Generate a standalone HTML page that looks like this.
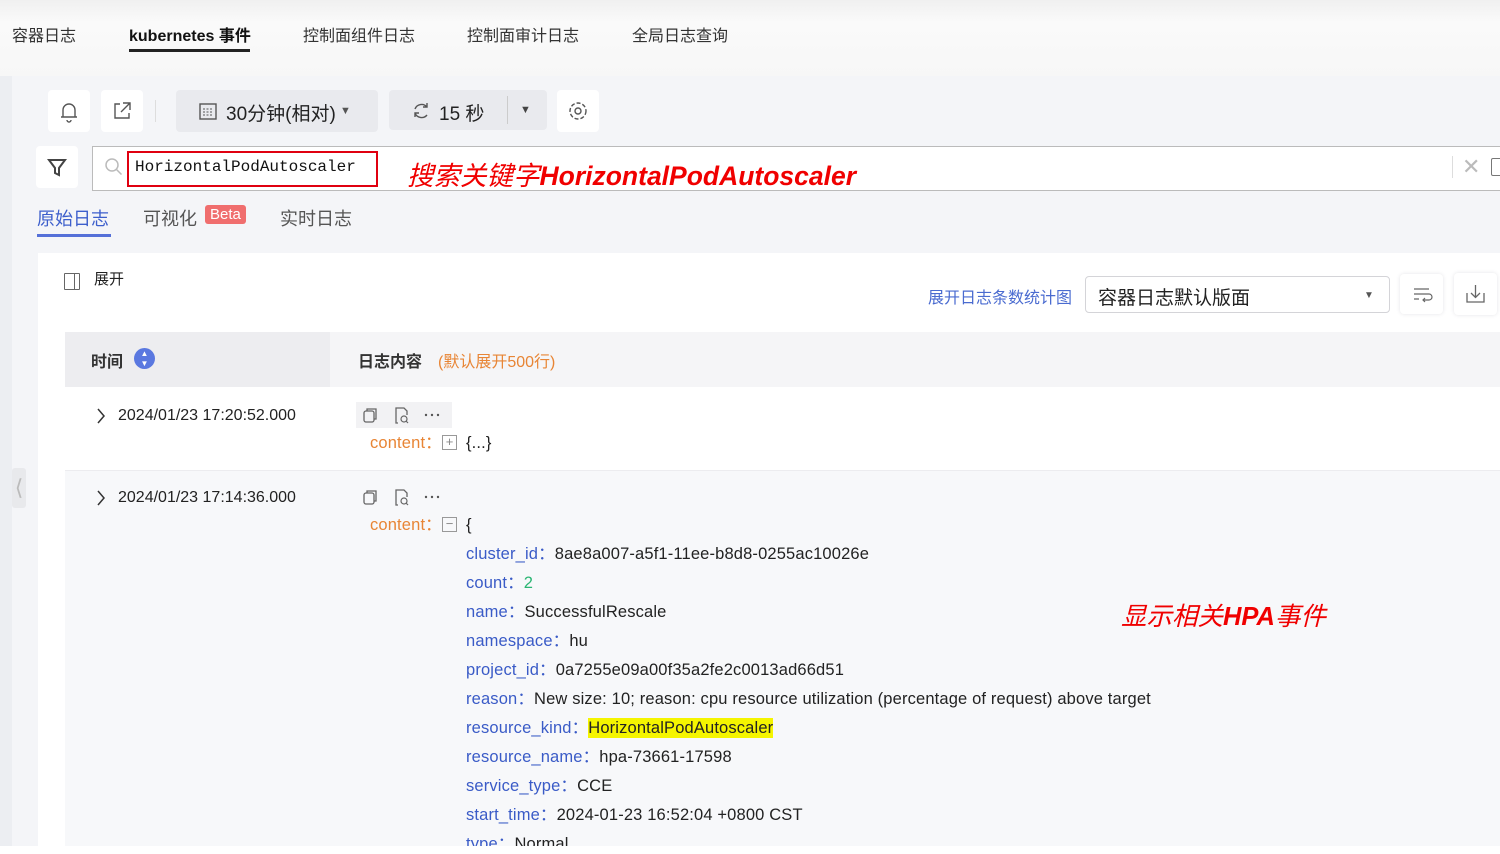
<!DOCTYPE html>
<html><head><meta charset="utf-8"><style>
*{margin:0;padding:0;box-sizing:border-box}
body{width:1500px;height:854px;overflow:hidden;background:#f4f5f8;font-family:"Liberation Sans","Noto Sans CJK SC",sans-serif;color:#222;position:relative}
.a{position:absolute;white-space:nowrap}
.top{position:absolute;left:0;top:0;width:1500px;height:76px;background:linear-gradient(#f0f0f0,#fafafa 30%,#f7f7f7)}
.tab{font-size:16px;color:#333;top:22px}
.btn{position:absolute;background:#fff;border-radius:4px}
.gbtn{position:absolute;background:#e9eaee;border-radius:4px}
.k{color:#3a5bc7}
.ln{position:absolute;left:466px;font-size:16.5px;white-space:nowrap;letter-spacing:0.15px;line-height:20px}
</style></head><body>
<div class="top"></div>
<div class="a tab" style="left:12px">容器日志</div>
<div class="a tab" style="left:129px;font-weight:bold;color:#111">kubernetes 事件</div>
<div class="a" style="left:129px;top:49px;width:121px;height:3px;background:#222"></div>
<div class="a tab" style="left:303px">控制面组件日志</div>
<div class="a tab" style="left:467px">控制面审计日志</div>
<div class="a tab" style="left:632px">全局日志查询</div>
<div class="a" style="left:0;top:76px;width:12px;height:778px;background:#eceef2"></div>

<div class="btn" style="left:48px;top:90px;width:42px;height:42px"><svg width="42" height="42"><path d="M13 27h16M15 27v-7a6 6 0 0 1 12 0v7M19 30a2 2 0 0 0 4 0" fill="none" stroke="#555" stroke-width="1.4"/></svg></div>
<div class="btn" style="left:101px;top:90px;width:42px;height:42px"><svg width="42" height="42"><path d="M19 14h-5v14h14v-5M22 13h7v7M29 13l-9 9" fill="none" stroke="#555" stroke-width="1.4"/></svg></div>
<div class="a" style="left:155px;top:100px;width:1px;height:22px;background:#ddd"></div>
<div class="gbtn" style="left:176px;top:90px;width:202px;height:42px"><svg class="a" style="left:22px;top:11px" width="20" height="20"><rect x="2" y="3" width="16" height="15" fill="none" stroke="#555" stroke-width="1.4"/><path d="M5 8h10M5 11h10M5 14h10" stroke="#555" stroke-dasharray="2 1.5"/></svg><span class="a" style="left:50px;top:9px;font-size:19px">30分钟(相对)</span><span class="a" style="left:164px;top:15px;font-size:11px;color:#555">▼</span></div>
<div class="gbtn" style="left:389px;top:90px;width:158px;height:40px"><svg class="a" style="left:22px;top:10px" width="20" height="20"><path d="M16 7a7 7 0 0 0-12 2M4 13a7 7 0 0 0 12 2M16 3v4h-4M4 17v-4h4" fill="none" stroke="#555" stroke-width="1.4"/></svg><span class="a" style="left:50px;top:9px;font-size:19px">15 秒</span><div class="a" style="left:118px;top:6px;width:1px;height:28px;background:#ccc"></div><span class="a" style="left:131px;top:14px;font-size:11px;color:#444">▼</span></div>
<div class="btn" style="left:557px;top:90px;width:42px;height:42px"><svg width="42" height="42"><circle cx="21" cy="21" r="3" fill="none" stroke="#555" stroke-width="1.4"/><circle cx="21" cy="21" r="8" fill="none" stroke="#555" stroke-width="1.4" stroke-dasharray="4 2"/></svg></div>

<div class="btn" style="left:36px;top:146px;width:42px;height:42px"><svg width="42" height="42"><path d="M13 14h16l-6 8v7l-4-2v-5z" fill="none" stroke="#444" stroke-width="2"/></svg></div>
<div class="a" style="left:92px;top:146px;width:1420px;height:45px;background:#fff;border:1px solid #bbb"></div>
<svg class="a" style="left:104px;top:157px" width="20" height="20"><circle cx="8" cy="8" r="6" fill="none" stroke="#bbb" stroke-width="1.5"/><path d="M12.5 12.5l5 5" stroke="#bbb" stroke-width="1.5"/></svg>
<div class="a" style="left:127px;top:151px;width:251px;height:36px;border:2px solid #e00010"></div>
<div class="a" style="left:135px;top:158px;font-family:'Liberation Mono',monospace;font-size:16px;color:#111">HorizontalPodAutoscaler</div>
<div class="a" style="left:407px;top:154px;font-size:26.5px;color:#f00000;font-style:italic"><span>搜索关键字</span><b>HorizontalPodAutoscaler</b></div>
<div class="a" style="left:1452px;top:156px;width:1px;height:22px;background:#ddd"></div>
<div class="a" style="left:1462px;top:154px;font-size:22px;color:#bbb">✕</div>
<div class="a" style="left:1491px;top:158px;width:12px;height:18px;border:1.5px solid #777;border-radius:2px"></div>

<div class="a" style="left:37px;top:205px;font-size:18px;color:#3d5fcc">原始日志</div>
<div class="a" style="left:37px;top:234px;width:74px;height:3px;background:#5570d8"></div>
<div class="a" style="left:143px;top:205px;font-size:18px;color:#555">可视化</div>
<div class="a" style="left:205px;top:205px;padding:1px 5px;background:#f06e6e;color:#fff;font-size:15px;border-radius:3px">Beta</div>
<div class="a" style="left:280px;top:205px;font-size:18px;color:#555">实时日志</div>

<div class="a" style="left:38px;top:253px;width:1462px;height:593px;background:#fff"></div>
<div class="a" style="left:12px;top:468px;width:14px;height:40px;background:#e8e9ec;border-radius:3px;color:#bbb;font-size:22px;text-align:center;line-height:40px">⟨</div>
<div class="a" style="left:64px;top:273px;width:16px;height:17px;border:1.3px solid #666;border-radius:1px"><div style="position:absolute;left:9px;top:0;width:1.3px;height:15px;background:#666"></div></div>
<div class="a" style="left:94px;top:268px;font-size:15px;color:#222">展开</div>
<div class="a" style="left:928px;top:284px;font-size:16px;color:#4a6bd0">展开日志条数统计图</div>
<div class="a" style="left:1085px;top:276px;width:305px;height:37px;border:1px solid #d4d4d8;border-radius:4px;background:#fff"><span class="a" style="left:12px;top:6px;font-size:19px;color:#222">容器日志默认版面</span><span class="a" style="left:278px;top:13px;font-size:10px;color:#555">▼</span></div>
<div class="btn" style="left:1400px;top:274px;width:43px;height:40px;box-shadow:0 0 4px #e4e4e8"><svg width="43" height="40"><path d="M14 15h15M14 20h15a3 3 0 0 1 0 6h-6M25 24l-2 2 2 2M14 25h5" fill="none" stroke="#666" stroke-width="1.2"/></svg></div>
<div class="btn" style="left:1454px;top:273px;width:43px;height:42px;box-shadow:0 0 4px #e4e4e8"><svg width="43" height="42"><path d="M13 20v9h17v-9M21.5 12v12M17 20l4.5 4.5 4.5-4.5" fill="none" stroke="#666" stroke-width="1.3"/></svg></div>

<div class="a" style="left:65px;top:332px;width:1435px;height:55px;background:#f5f5f7"></div>
<div class="a" style="left:65px;top:332px;width:265px;height:55px;background:#ededf0"></div>
<div class="a" style="left:91px;top:348px;font-size:16px;font-weight:bold;color:#333">时间</div>
<div class="a" style="left:134px;top:348px;width:21px;height:21px;border-radius:50%;background:#5a78e0;color:#fff;font-size:8px;text-align:center;line-height:10px;padding-top:1px">▲<br>▼</div>
<div class="a" style="left:358px;top:348px;font-size:16px;font-weight:bold;color:#333">日志内容</div>
<div class="a" style="left:438px;top:348px;font-size:16px;color:#e88535">(默认展开500行)</div>

<div class="a" style="left:65px;top:470px;width:1435px;height:376px;background:#f7f8fa;border-top:1px solid #ececef"></div>
<svg class="a" style="left:95px;top:407px" width="12" height="18"><path d="M3 2l6 7-6 7" fill="none" stroke="#333" stroke-width="1.5"/></svg>
<div class="a" style="left:118px;top:407px;font-size:16px">2024/01/23 17:20:52.000</div>
<svg class="a" style="left:95px;top:489px" width="12" height="18"><path d="M3 2l6 7-6 7" fill="none" stroke="#333" stroke-width="1.5"/></svg>
<div class="a" style="left:118px;top:489px;font-size:16px">2024/01/23 17:14:36.000</div>

<div class="a" style="left:356px;top:402px;width:96px;height:26px;background:#f2f2f4"></div>
<svg class="a" style="left:362px;top:406px" width="80" height="20"><rect x="2" y="5" width="10" height="11" rx="2" fill="none" stroke="#666" stroke-width="1.3"/><path d="M5 5V3h9v10h-2" fill="none" stroke="#666" stroke-width="1.3"/><path d="M36 17h-2V2h8l3 3v4" fill="none" stroke="#666" stroke-width="1.3"/><circle cx="42" cy="13" r="3" fill="none" stroke="#666" stroke-width="1.2"/><path d="M44 15l2 2" stroke="#666" stroke-width="1.2"/><circle cx="70" cy="9" r="1.2" fill="#555"/><circle cx="76" cy="9" r="1.2" fill="#555"/><circle cx="64" cy="9" r="1.2" fill="#555"/></svg>
<div class="ln" style="left:370px;top:433px;color:#e88535">content：</div>
<div class="a" style="left:442px;top:435px;width:15px;height:15px;border:1px solid #999;font-size:13px;line-height:12px;text-align:center;color:#888">+</div>
<div class="ln" style="top:433px">{...}</div>

<svg class="a" style="left:362px;top:488px" width="80" height="20"><rect x="2" y="5" width="10" height="11" rx="2" fill="none" stroke="#666" stroke-width="1.3"/><path d="M5 5V3h9v10h-2" fill="none" stroke="#666" stroke-width="1.3"/><path d="M36 17h-2V2h8l3 3v4" fill="none" stroke="#666" stroke-width="1.3"/><circle cx="42" cy="13" r="3" fill="none" stroke="#666" stroke-width="1.2"/><path d="M44 15l2 2" stroke="#666" stroke-width="1.2"/><circle cx="70" cy="9" r="1.2" fill="#555"/><circle cx="76" cy="9" r="1.2" fill="#555"/><circle cx="64" cy="9" r="1.2" fill="#555"/></svg>
<div class="ln" style="left:370px;top:515px;color:#e88535">content：</div>
<div class="a" style="left:442px;top:517px;width:15px;height:15px;border:1px solid #999;font-size:13px;line-height:12px;text-align:center;color:#888">−</div>
<div class="ln" style="top:515px">{</div>

<div class="ln" style="top:544px"><span class="k">cluster_id：</span>8ae8a007-a5f1-11ee-b8d8-0255ac10026e</div>
<div class="ln" style="top:573px"><span class="k">count：</span><span style="color:#2bb673">2</span></div>
<div class="ln" style="top:602px"><span class="k">name：</span>SuccessfulRescale</div>
<div class="ln" style="top:631px"><span class="k">namespace：</span>hu</div>
<div class="ln" style="top:660px"><span class="k">project_id：</span>0a7255e09a00f35a2fe2c0013ad66d51</div>
<div class="ln" style="top:689px"><span class="k">reason：</span>New size: 10; reason: cpu resource utilization (percentage of request) above target</div>
<div class="ln" style="top:718px"><span class="k">resource_kind：</span><span style="background:#f5f500;padding:1px 0">HorizontalPodAutoscaler</span></div>
<div class="ln" style="top:747px"><span class="k">resource_name：</span>hpa-73661-17598</div>
<div class="ln" style="top:776px"><span class="k">service_type：</span>CCE</div>
<div class="ln" style="top:805px"><span class="k">start_time：</span>2024-01-23 16:52:04 +0800 CST</div>
<div class="ln" style="top:834px;height:12px;overflow:hidden"><span class="k">type：</span>Normal</div>
<div class="a" style="left:0;top:846px;width:1500px;height:8px;background:#fff"></div>
<div class="a" style="left:1121px;top:596px;font-size:25.5px;color:#f00000;font-style:italic">显示相关<b>HPA</b>事件</div>
</body></html>
